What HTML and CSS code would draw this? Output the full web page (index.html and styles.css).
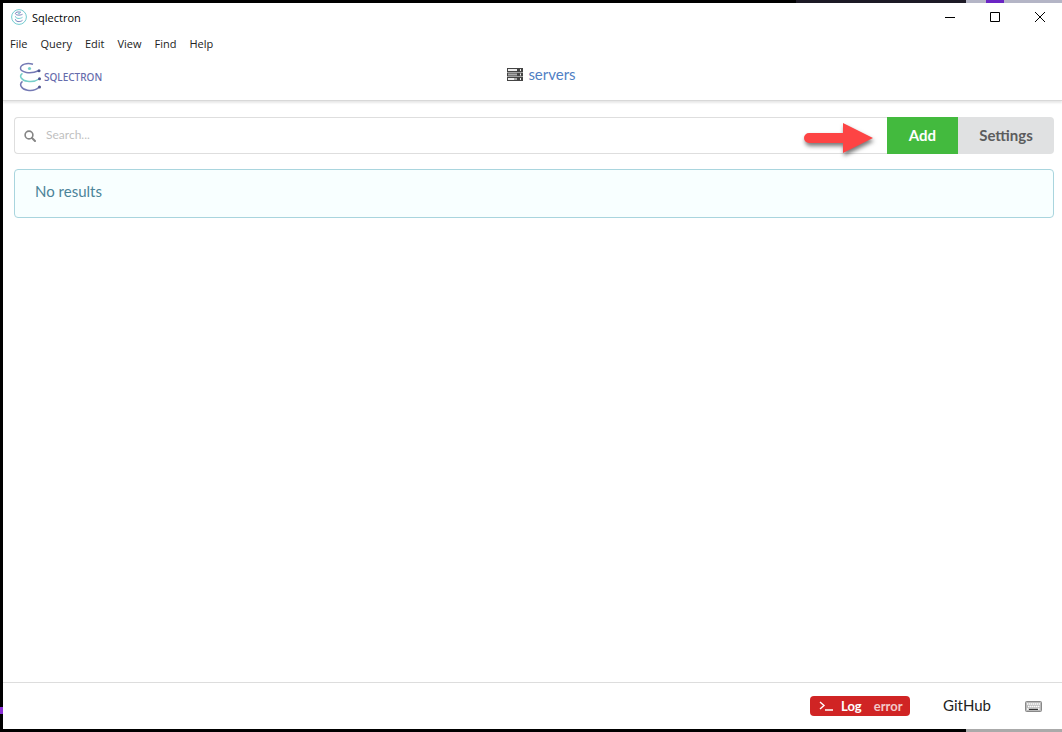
FILE: index.html
```html
<!DOCTYPE html>
<html lang="en">
<head>
<meta charset="utf-8">
<title>Sqlectron</title>
<link rel="stylesheet" href="styles.css">
</head>
<body>
<div class="desktop">
  <div class="window">
    <div class="titlebar">
      <svg class="app-icon" viewBox="0 0 16 16" fill="none" stroke-width="1">
        <circle cx="8" cy="8" r="7.400" stroke="#72cbd0"/>
        <path d="M10 3.300C7 2.400 4.400 3.200 4.400 4.600S8.500 6.800 11.500 5.300M4.400 10.200C4.400 12.800 9 13.500 11.500 11.300" stroke="#7a83bb"/>
        <path d="M4.400 7.200C4.400 9.700 9 10.200 11.500 8.300" stroke="#72cbd0"/>
        <circle cx="8" cy="4.300" r=".5" stroke="#72cbd0"/>
      </svg>
      <span class="title">Sqlectron</span>
      <div class="controls">
        <button aria-label="Minimize"><svg viewBox="0 0 12 12"><path d="M1 6.500h10"/></svg></button>
        <button aria-label="Maximize"><svg viewBox="0 0 12 12"><path d="M1.500 1.500h9v9h-9z"/></svg></button>
        <button aria-label="Close"><svg viewBox="0 0 12 12"><path d="M1 1l10 10M11 1L1 11"/></svg></button>
      </div>
    </div>
    <nav class="menubar">
      <button>File</button><button>Query</button><button>Edit</button><button>View</button><button>Find</button><button>Help</button>
    </nav>
    <header class="header">
      <div class="brand">
        <svg class="brand-icon" viewBox="0 0 23 30" fill="none" stroke-width="1.500">
          <path d="M14 2.300C8 .4 1.500 2.400 1.500 6.300S11 12.500 19.500 8.800" stroke="#7479b4"/>
          <path d="M3.500 11.300C-.5 14 2.500 18.500 8.500 19.300C13.500 20 18 18.500 20 17" stroke="#77cec9"/>
          <path d="M3.500 19.300C-.5 22.500 2.500 27.500 8.500 28.200C13.500 29 18 27.200 20 25.300" stroke="#7479b4"/>
          <circle cx="10.500" cy="6.500" r="1.600" fill="#77cec9"/>
          <circle cx="20" cy="8.700" r="1.500" fill="#4e5591"/>
          <circle cx="20.500" cy="16.700" r="1.500" fill="#4e5591"/>
          <circle cx="20.500" cy="25" r="1.500" fill="#4e5591"/>
        </svg>
        <span>SQLECTRON</span>
      </div>
      <a class="servers" href="#">
        <svg viewBox="0 0 16 13">
          <path fill="#444" d="M0 0h16v4H0zM0 4.500h16v4H0zM0 9h16v4H0z"/>
          <path fill="#eee" d="M1 1h9v2H1zM1 10h6v2H1zM13 1h1v2h-1zM13 5.500h1v2h-1zM13 10h1v2h-1z"/>
          <path fill="#aaa" d="M1 5.500h9v2H1zM7 10h3v2H7z"/>
        </svg>
        <span>servers</span>
      </a>
    </header>
    <main class="main">
      <div class="toolbar">
        <label class="search">
          <svg viewBox="0 0 12 12" fill="none" stroke="#858585"><circle cx="5" cy="5" r="3.900" stroke-width="1.600"/><path d="M8 8l3 3" stroke-width="2" stroke-linecap="round"/></svg>
          <input type="text" placeholder="Search..." aria-label="Search">
        </label>
        <button class="add">Add</button>
        <button class="settings">Settings</button>
        <svg class="arrow" viewBox="0 0 70 32" fill="#fd4444"><path d="M6 10H40V0L70 15L40 30V20H6A5 5 0 0 1 6 10Z"/></svg>
      </div>
      <div class="message">No results</div>
    </main>
    <footer class="footer">
      <button class="log">
        <svg viewBox="0 0 14 10" fill="none" stroke="#fff" stroke-width="1.400"><path d="M1 1l4 3.500L1 8M6 9h8"/></svg>
        <span>Log</span><span class="level">error</span>
      </button>
      <a class="github" href="#">GitHub</a>
      <button class="keyboard" aria-label="Keyboard shortcuts">
        <svg viewBox="0 0 17 11"><rect x=".5" y=".5" width="16" height="10" rx="1" fill="#bbb" stroke="#888"/><path stroke="#fff" stroke-width="1.500" stroke-dasharray="1.500 .5" d="M2 3h13M3 5.500h12M2 8h2M13 8h2"/><path stroke="#333" d="M4 8.500h9"/></svg>
      </button>
    </footer>
  </div>
</div>
</body>
</html>
```
FILE: styles.css
```css
* { box-sizing: border-box; }
body { margin: 0; font-family: Lato, sans-serif; }
button { border: 0; padding: 0; background: none; font: inherit; color: inherit; }
a { text-decoration: none; }
svg { display: block; }

.desktop {
  display: flex;
  min-height: 100vh;
  padding: 3px 0 3px 3px;
  background:
    linear-gradient(#6b25c4, #6b25c4) right 58px top 0 / 18px 3px no-repeat,
    linear-gradient(#b4b5c6, #b4b5c6) right 0 top 0 / 96px 3px no-repeat,
    linear-gradient(#1d1a26, #1d1a26) right 96px top 0 / 170px 3px no-repeat,
    linear-gradient(#aaa, #aaa) right 0 bottom 0 / 96px 3px no-repeat,
    linear-gradient(#8a2fd6, #8a2fd6) left 0 bottom 18px / 3px 7px no-repeat,
    #000;
}
.window { flex: 1; display: flex; flex-direction: column; overflow: hidden; background: #fff; }

.titlebar { display: flex; align-items: center; height: 28px; padding-left: 8px; font-family: "Open Sans", sans-serif; font-size: 11px; color: #000; }
.app-icon { width: 16px; height: 16px; }
.title { margin-left: 5px; }
.controls { display: flex; margin-left: auto; }
.controls button { display: grid; place-items: center; width: 45px; height: 28px; }
.controls svg { width: 12px; height: 12px; fill: none; stroke: #000; stroke-width: 1; }

.menubar { display: flex; gap: 13px; height: 25px; padding-left: 7px; font-family: "Open Sans", sans-serif; font-size: 11px; color: #222; }

.header { display: grid; grid-template-columns: 1fr auto 1fr; align-items: center; height: 45px; padding: 0 0 2px 16px; border-bottom: 1px solid #d8d8d8; box-shadow: 0 2px 2px #e8e8e8; }
.brand { display: flex; align-items: center; gap: 2px; font-family: "Noto Sans", sans-serif; font-size: 10px; font-weight: 500; color: #666cac; }
.brand-icon { width: 23px; height: 30px; }
.servers { display: flex; align-items: center; gap: 5px; padding: 0 0 6px 2px; font-size: 15px; color: #5080c4; }
.servers svg { width: 16px; height: 13px; }

.main { flex: 1; padding: 16px 8px 16px 11px; }
.toolbar { position: relative; display: flex; height: 37px; }
.search { flex: 1; display: flex; align-items: center; gap: 10px; padding-left: 9px; border: 1px solid #dedede; border-right: 0; border-radius: 4px 0 0 4px; }
.search svg { width: 12px; height: 12px; }
.search input { flex: 1; min-width: 0; border: 0; padding: 0 0 2px; outline: 0; font: 12px Lato, sans-serif; }
.search input::placeholder { color: #bfbfbf; opacity: 1; }
.add, .settings { padding-bottom: 2px; font-size: 15px; font-weight: bold; }
.add { width: 71px; background: #43ba3e; color: #fff; }
.settings { width: 96px; border-radius: 0 4px 4px 0; background: #e0e1e2; color: #5c5c5d; }
.arrow { position: absolute; right: 181px; top: 6px; width: 70px; height: 32px; overflow: visible; filter: drop-shadow(1px 3px 2px #0008); }
.message { height: 49px; margin-top: 15px; padding: 11px 20px; border: 1px solid #a9d5de; border-radius: 4px; background: #f8ffff; font-size: 15px; line-height: 20px; color: #4b8499; }

.footer { display: flex; align-items: center; height: 47px; padding-right: 20px; justify-content: flex-end; border-top: 1px solid #ddd; }
.log { display: flex; align-items: center; height: 20px; width: 100px; padding-left: 9px; border-radius: 4px; background: #d02424; color: #fff; font-size: 13px; font-weight: bold; }
.log svg { width: 14px; height: 10px; margin-right: 8px; }
.level { margin-left: 12px; color: #f3c8c8; }
.github { margin: 0 34px 0 33px; padding-bottom: 2px; font-size: 15px; color: #222; }
.keyboard svg { width: 17px; height: 11px; }
```
